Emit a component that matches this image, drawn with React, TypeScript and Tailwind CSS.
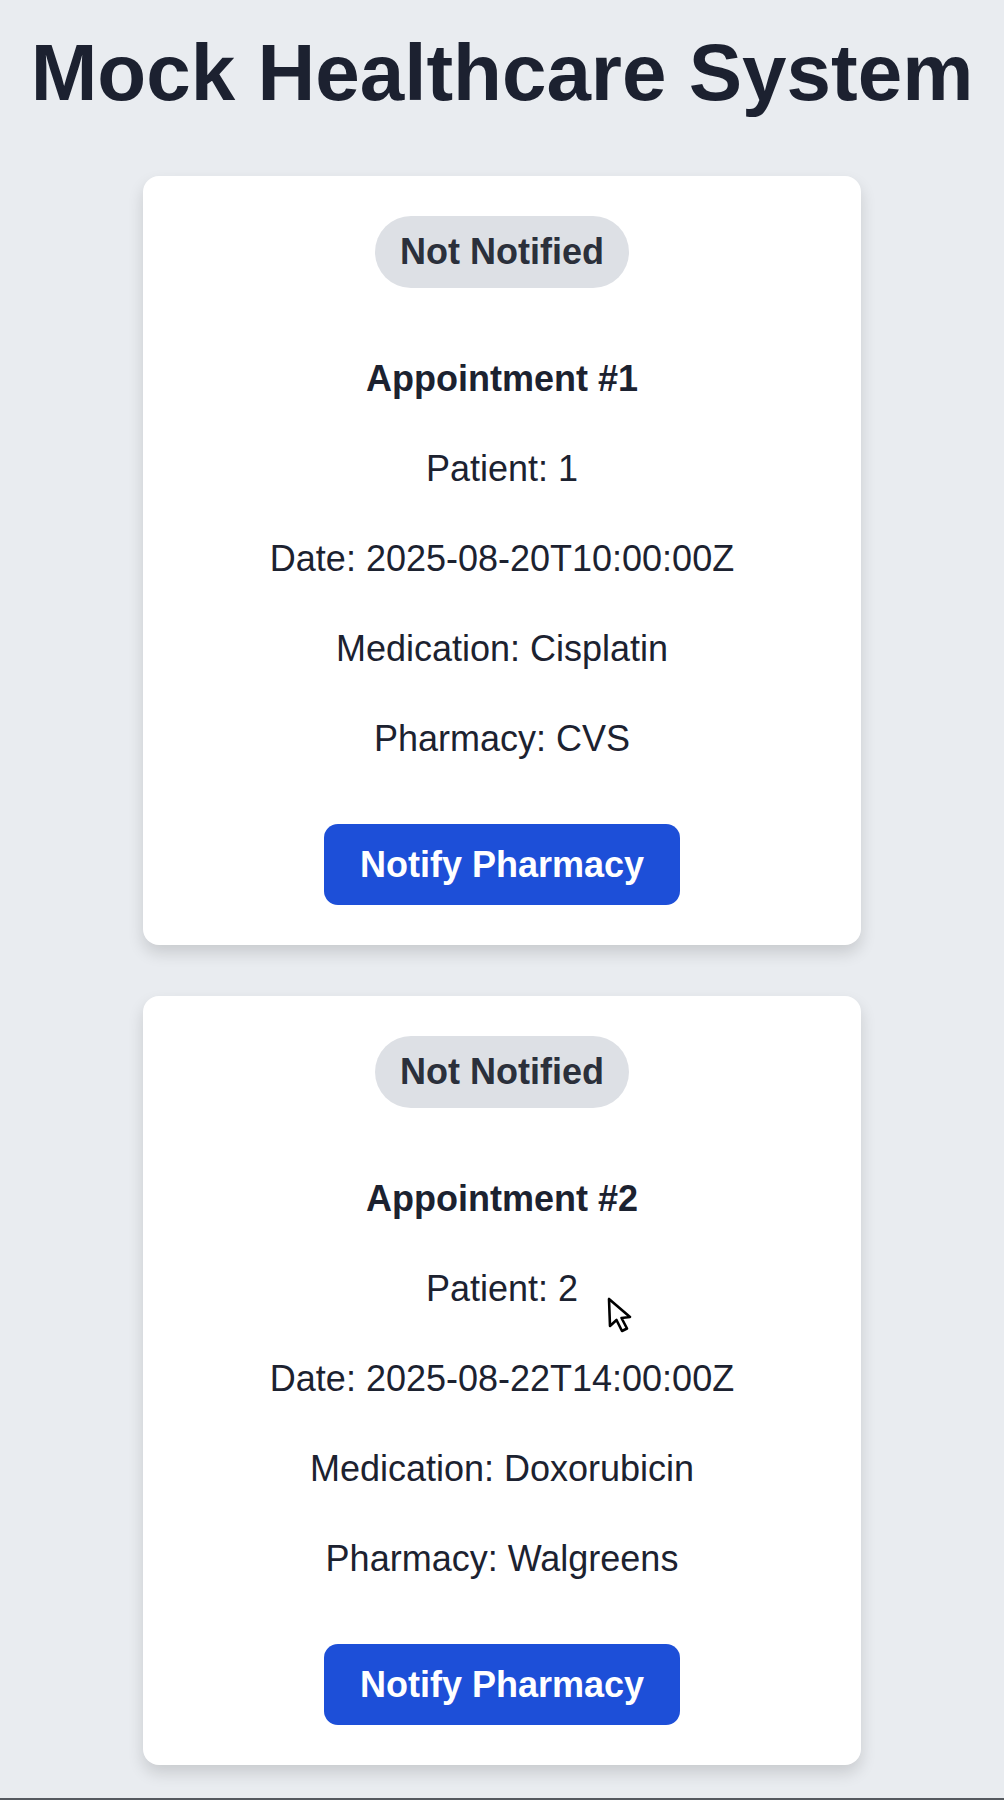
import React from 'react';

type Appointment = {
  id: number;
  patient: number;
  date: string;
  medication: string;
  pharmacy: string;
};

const appointments: Appointment[] = [
  { id: 1, patient: 1, date: '2025-08-20T10:00:00Z', medication: 'Cisplatin', pharmacy: 'CVS' },
  { id: 2, patient: 2, date: '2025-08-22T14:00:00Z', medication: 'Doxorubicin', pharmacy: 'Walgreens' },
];

function AppointmentCard({ appt }: { appt: Appointment }) {
  return (
    <div className="w-[718px] mx-auto bg-white rounded-[16px] shadow-[0_8px_16px_rgba(0,0,0,0.14)] px-10 pt-10 pb-10 flex flex-col items-center text-center">
      <span className="bg-[#dde0e5] text-[#2b303b] rounded-full px-[25px] py-3 text-[36px] leading-[48px] font-bold">
        Not Notified
      </span>

      <div className="mt-[64px] flex flex-col gap-9 text-[36px] leading-[54px] text-[#1c2230]">
        <h3 className="font-bold">Appointment #{appt.id}</h3>
        <p>Patient: {appt.patient}</p>
        <p>Date: {appt.date}</p>
        <p>Medication: {appt.medication}</p>
        <p>Pharmacy: {appt.pharmacy}</p>
      </div>

      <button className="mt-[58px] h-[81px] w-[356px] bg-[#1d4fd8] text-white rounded-[14px] text-[36px] font-bold">
        Notify Pharmacy
      </button>
    </div>
  );
}

export default function App() {
  return (
    <div
      className="relative min-h-screen bg-[#e9ecf0] border-b-2 border-[#55595f] pt-[33px]"
      style={{ fontFamily: '"Liberation Sans", Arial, Helvetica, sans-serif' }}
    >
      <h1 className="text-center text-[80px] leading-[80px] font-bold text-[#1c2130]">
        Mock Healthcare System
      </h1>

      <div className="mt-[63px] flex flex-col gap-[51px]">
        {appointments.map((a) => (
          <AppointmentCard key={a.id} appt={a} />
        ))}
      </div>

      {/* mouse pointer captured in the shot */}
      <svg
        className="absolute left-[607px] top-[1297px]"
        width="26"
        height="38"
        viewBox="0 0 26 38"
      >
        <path
          d="M2 2 L3 29 L9.5 23 L15 34 L20 31.5 L14.5 21 L23 20 Z"
          fill="white"
          stroke="black"
          strokeWidth="2.6"
          strokeLinejoin="round"
        />
      </svg>
    </div>
  );
}
